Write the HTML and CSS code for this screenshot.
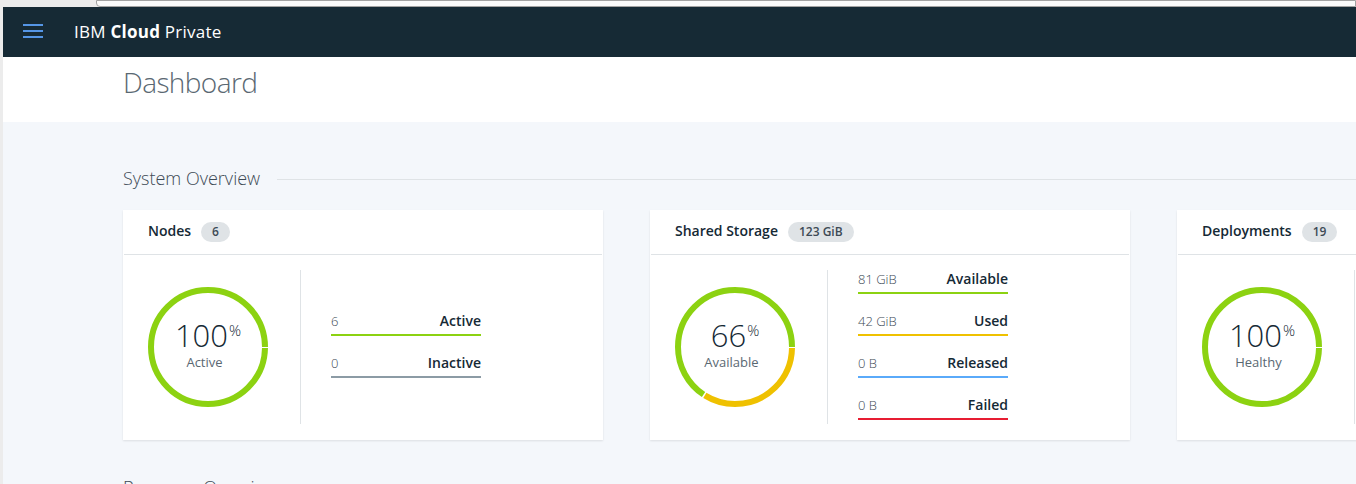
FILE: index.html
```html
<!DOCTYPE html>
<html lang="en">
<head>
<meta charset="utf-8">
<title>IBM Cloud Private - Dashboard</title>
<link rel="stylesheet" href="styles.css">
</head>
<body>
<div class="chrome"><div class="urlbar"></div></div>
<div class="app">
  <div class="edge"></div>
  <div class="main">
    <header class="topbar">
      <div class="hamburger"><span></span><span></span><span></span></div>
      <div class="brand">IBM <b>Cloud</b> Private</div>
    </header>
    <div class="page-head">
      <h1 class="page-title">Dashboard</h1>
    </div>
    <div class="overview">
      <section class="section">
        <div class="section-head">
          <h2 class="section-title">System Overview</h2>
          <div class="section-rule"></div>
        </div>
        <div class="cards">
          <div class="card">
            <div class="card-head">
              <span class="card-title">Nodes</span>
              <span class="badge">6</span>
            </div>
            <div class="card-body">
              <div class="donut">
                <svg class="ring" viewBox="0 0 120 120" width="120" height="120">
                  <circle cx="60" cy="60" r="57" class="arc green" stroke-dasharray="356.6 10"></circle>
                </svg>
                <div class="donut-text">
                  <div class="donut-num">100<span class="pct">%</span></div>
                  <div class="donut-label">Active</div>
                </div>
              </div>
              <div class="vdivider"></div>
              <div class="legend">
                <div class="legend-row green-line"><span class="lv">6</span><span class="ln">Active</span></div>
                <div class="legend-row gray-line"><span class="lv">0</span><span class="ln">Inactive</span></div>
              </div>
            </div>
          </div>

          <div class="card">
            <div class="card-head">
              <span class="card-title">Shared Storage</span>
              <span class="badge">123 GiB</span>
            </div>
            <div class="card-body">
              <div class="donut">
                <svg class="ring" viewBox="0 0 120 120" width="120" height="120">
                  <circle cx="60" cy="60" r="57" class="arc green" stroke-dasharray="234.9 400"></circle>
                  <circle cx="60" cy="60" r="57" class="arc yellow" stroke-dasharray="120.2 400" stroke-dashoffset="-236.4"></circle>
                </svg>
                <div class="donut-text">
                  <div class="donut-num">66<span class="pct">%</span></div>
                  <div class="donut-label">Available</div>
                </div>
              </div>
              <div class="vdivider"></div>
              <div class="legend">
                <div class="legend-row green-line"><span class="lv">81 GiB</span><span class="ln">Available</span></div>
                <div class="legend-row yellow-line"><span class="lv">42 GiB</span><span class="ln">Used</span></div>
                <div class="legend-row blue-line"><span class="lv">0 B</span><span class="ln">Released</span></div>
                <div class="legend-row red-line"><span class="lv">0 B</span><span class="ln">Failed</span></div>
              </div>
            </div>
          </div>

          <div class="card">
            <div class="card-head">
              <span class="card-title">Deployments</span>
              <span class="badge">19</span>
            </div>
            <div class="card-body">
              <div class="donut">
                <svg class="ring" viewBox="0 0 120 120" width="120" height="120">
                  <circle cx="60" cy="60" r="57" class="arc green" stroke-dasharray="356.6 10"></circle>
                </svg>
                <div class="donut-text">
                  <div class="donut-num">100<span class="pct">%</span></div>
                  <div class="donut-label">Healthy</div>
                </div>
              </div>
              <div class="vdivider"></div>
            </div>
          </div>
        </div>
      </section>

      <section class="section">
        <div class="section-head">
          <h2 class="section-title">Resource Overview</h2>
          <div class="section-rule"></div>
        </div>
      </section>
    </div>
  </div>
</div>
</body>
</html>
```

FILE: styles.css
```css
* { box-sizing: border-box; }
html, body {
  margin: 0;
  padding: 0;
  overflow: hidden;
  height: 100%;
}
body {
  font-family: "Open Sans", "Noto Sans", sans-serif;
  background: #f4f7fb;
  color: #152935;
}

.chrome {
  height: 7px;
  background: #ececec;
  display: flex;
}
.urlbar {
  margin-left: 96px;
  flex: 1;
  height: 7px;
  background: #fafafa;
  border: 1px solid #a2a2a2;
  border-radius: 0 0 0 4px;
}

.app {
  display: flex;
  min-height: calc(100% - 7px);
}
.edge {
  width: 3px;
  flex: none;
  background: #ececec;
}
.main {
  flex: 1;
  min-width: 0;
  overflow: hidden;
}

.topbar {
  height: 50px;
  background: #162a35;
  display: flex;
  align-items: center;
  padding-left: 20px;
}
.hamburger {
  width: 20px;
  height: 14px;
  display: flex;
  flex-direction: column;
  justify-content: space-between;
  margin-top: -3px;
}
.hamburger span {
  display: block;
  height: 2px;
  background: #5596e6;
}
.brand {
  margin-left: 31px;
  color: #ffffff;
  font-size: 17px;
  letter-spacing: 0.25px;
  margin-top: -2px;
}
.brand b { font-weight: 700; }

.page-head {
  background: #ffffff;
  height: 65px;
  padding: 7px 0 0 120px;
}
.page-title {
  margin: 0;
  font-size: 28px;
  line-height: 36px;
  font-weight: 300;
  letter-spacing: -0.6px;
  color: #5a6872;
}

.overview {
  padding: 44px 0 0 120px;
}
.section + .section { margin-top: 35px; }
.section-head {
  display: flex;
  align-items: center;
  height: 24px;
}
.section-title {
  margin: 0;
  font-size: 18px;
  line-height: 24px;
  font-weight: 300;
  color: #3d4a55;
  white-space: nowrap;
}
.section-rule {
  flex: 1;
  height: 1px;
  background: #dfe3e6;
  margin-left: 17px;
  margin-top: 3px;
}

.cards {
  display: flex;
  gap: 47px;
  margin-top: 20px;
}
.card {
  flex: none;
  width: 480px;
  height: 230px;
  background: #ffffff;
  box-shadow: 0 1px 2px rgba(0, 0, 0, 0.1);
}
.card-head {
  height: 45px;
  border-bottom: 1px solid #dfe3e6;
  margin: 0 1px;
  display: flex;
  align-items: center;
  padding-left: 24px;
}
.card-title {
  font-size: 14px;
  font-weight: 600;
  color: #152935;
  margin-bottom: 4px;
}
.badge {
  margin-left: 10px;
  height: 20px;
  line-height: 20px;
  padding: 0 11px;
  border-radius: 10px;
  background: #dfe3e6;
  font-size: 12px;
  font-weight: 600;
  color: #3d4a55;
}

.card-body {
  display: flex;
  align-items: center;
  padding: 15px 0 16px 25px;
  height: 185px;
}
.donut {
  width: 120px;
  height: 120px;
  display: grid;
  flex: none;
}
.ring, .donut-text { grid-area: 1 / 1; }
.ring {
  transform: scaleY(-1);
}
.arc {
  fill: none;
  stroke-width: 6;
}
.arc.green { stroke: #8cd211; }
.arc.yellow { stroke: #efc100; }

.donut-text {
  display: flex;
  flex-direction: column;
  align-items: center;
  justify-content: center;
  padding-bottom: 5px;
}
.donut-num {
  font-size: 31px;
  line-height: 32px;
  font-weight: 300;
  color: #152935;
}
.pct {
  font-size: 15px;
  line-height: 1;
  vertical-align: 11px;
  margin-left: 1px;
}
.donut-label {
  margin-top: 3px;
  font-size: 13px;
  line-height: 16px;
  color: #5a6872;
  padding-right: 7px;
}

.vdivider {
  align-self: stretch;
  width: 1px;
  background: #dfe3e6;
  margin-left: 32px;
  flex: none;
}
.legend {
  margin-left: 30px;
  width: 150px;
  display: flex;
  flex-direction: column;
  gap: 18px;
  margin-bottom: 4px;
}
.legend-row {
  display: flex;
  justify-content: space-between;
  align-items: baseline;
  line-height: 18px;
  padding-bottom: 4px;
  border-bottom: 2px solid #8c9ba5;
}
.lv {
  font-size: 13px;
  font-weight: 300;
  color: #3d4a55;
}
.ln {
  font-size: 14px;
  font-weight: 600;
  color: #152935;
}
.green-line { border-bottom-color: #8cd211; }
.gray-line { border-bottom-color: #8c9ba5; }
.yellow-line { border-bottom-color: #efc100; }
.blue-line { border-bottom-color: #5aaafa; }
.red-line { border-bottom-color: #e71d32; }
```
